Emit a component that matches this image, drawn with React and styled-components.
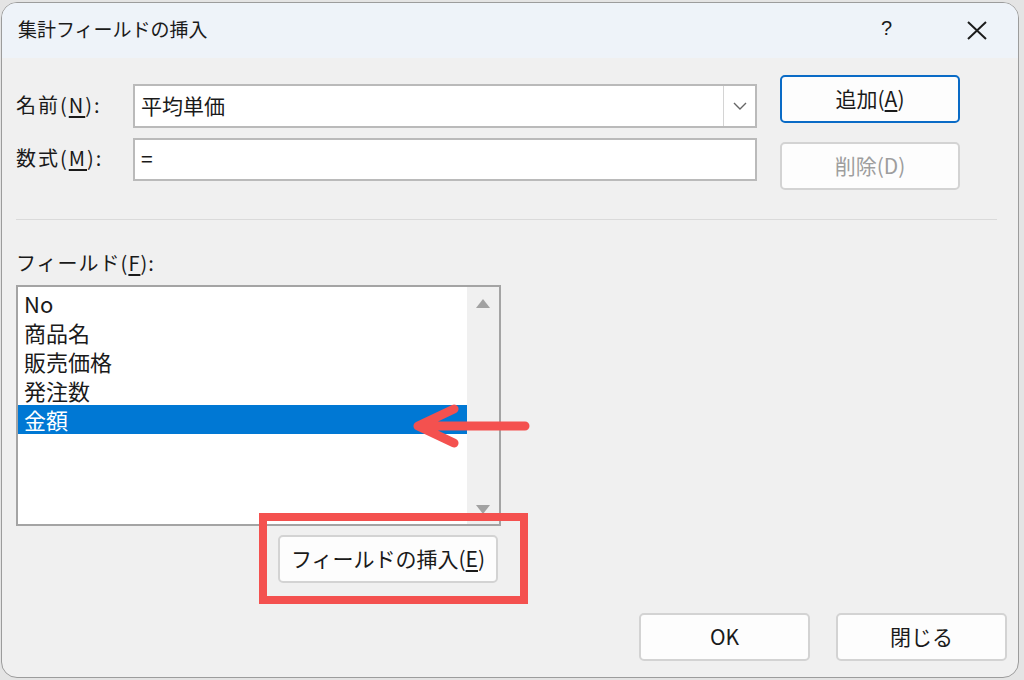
import styled, { createGlobalStyle } from 'styled-components';

const GlobalStyle = createGlobalStyle`
  html, body {
    margin: 0;
    padding: 0;
    background: #e4e4e4;
    font-family: "Noto Sans CJK JP", "Noto Sans", sans-serif;
    color: #1a1a1a;
  }
`;

const FONT = `"Noto Sans CJK JP", "Noto Sans", sans-serif`;

const fields = ['No', '商品名', '販売価格', '発注数', '金額'];

const Window = styled.div`
  position: relative;
  box-sizing: border-box;
  width: 1018px;
  height: 676px;
  margin: 2px 0 0 1px;
  border: 1px solid #9c9c9c;
  border-radius: 16px;
  overflow: hidden;
  background: #f0f0f0;
  display: flex;
  flex-direction: column;
`;

const TitleBar = styled.div`
  height: 55px;
  flex: none;
  background: #eef3f9;
  display: flex;
  align-items: center;
  padding: 0 31px 0 16px;
  font-size: 19px;
  font-family: ${FONT};
`;

const Title = styled.span`
  flex: 1;
  padding-bottom: 4px;
`;

const Help = styled.span`
  font-size: 20px;
  font-family: "Liberation Sans", sans-serif;
  padding-bottom: 4px;
  margin-right: 75px;
`;

const Body = styled.div`
  flex: 1;
  padding: 17px 11px 0 14px;
  display: flex;
  flex-direction: column;
`;

const TopSection = styled.div`
  display: flex;
  align-items: flex-start;
`;

const FormGrid = styled.div`
  margin-top: 9px;
  display: grid;
  grid-template-columns: 117px 624px;
  grid-auto-rows: 44px;
  row-gap: 9px;
  align-items: center;
`;

const Label = styled.label`
  font-size: 20px;
  letter-spacing: 2px;
  line-height: 24px;
  padding-bottom: 2px;
`;

const Key = styled.span`
  text-decoration: underline;
  text-underline-offset: 3px;
  text-decoration-thickness: 1.5px;
`;

const Field = styled.div`
  box-sizing: border-box;
  height: ${(p) => (p.$short ? 43 : 44)}px;
  background: #fff;
  border: 2px solid #bababa;
  display: flex;
  align-items: center;
  font-size: 21px;
  padding-left: 6px;
`;

const FieldText = styled.span`
  flex: 1;
  padding-bottom: 2px;
`;

const DropButton = styled.div`
  width: 31px;
  height: 100%;
  border-left: 1px solid #d4d4d4;
  display: flex;
  align-items: center;
  justify-content: center;
`;

const ButtonColumn = styled.div`
  margin-left: 23px;
  display: flex;
  flex-direction: column;
  gap: 19px;
`;

const Button = styled.button`
  box-sizing: border-box;
  width: ${(p) => p.$w || 180}px;
  height: 48px;
  background: #fdfdfd;
  border: 2px solid ${(p) => (p.$primary ? '#0a6bc6' : '#d3d3d3')};
  border-radius: 5px;
  font-family: ${FONT};
  font-size: 21px;
  color: ${(p) => (p.$disabled ? '#9e9e9e' : '#1a1a1a')};
  padding: 0 0 3px;
  display: flex;
  align-items: center;
  justify-content: center;
`;

const Separator = styled.div`
  height: 1px;
  background: #dadada;
  margin: 29px 10px 0 0;
`;

const SectionLabel = styled(Label)`
  margin-top: 31px;
  letter-spacing: 1px;
`;

const ListBox = styled.div`
  box-sizing: border-box;
  margin-top: 8px;
  width: 485px;
  height: 241px;
  border: 2px solid #a4a4a4;
  background: #fff;
  display: flex;
`;

const Items = styled.div`
  flex: 1;
  padding-top: 2px;
`;

const Item = styled.div`
  height: 29px;
  line-height: 28px;
  padding-left: 6px;
  font-size: 22px;
  background: ${(p) => (p.$selected ? '#0078d4' : 'transparent')};
  color: ${(p) => (p.$selected ? '#fff' : '#1a1a1a')};
`;

const ScrollBar = styled.div`
  width: 32px;
  background: #f0f0f0;
  display: flex;
  flex-direction: column;
  align-items: center;
  justify-content: space-between;
  padding: 12px 0 10px;
`;

const InsertRow = styled.div`
  width: 485px;
  margin-top: 9px;
  display: flex;
  justify-content: flex-end;
  padding-right: 3px;
  box-sizing: border-box;
`;

const Footer = styled.div`
  margin-top: 30px;
  display: flex;
  justify-content: flex-end;
  gap: 26px;
`;

const Highlight = styled.div`
  position: absolute;
  left: 257px;
  top: 510px;
  width: 269px;
  height: 91px;
  box-sizing: border-box;
  border: 8px solid #f4514f;
  pointer-events: none;
`;

const Arrow = styled.svg`
  position: absolute;
  left: 409px;
  top: 398px;
  pointer-events: none;
`;

const Triangle = ({ up }) => (
  <svg width="14" height="9" viewBox="0 0 14 9">
    <polygon points={up ? '7,0 14,9 0,9' : '0,0 14,0 7,9'} fill="#a2a2a2" />
  </svg>
);

export default function App() {
  return (
    <>
      <GlobalStyle />
      <Window>
        <TitleBar>
          <Title>集計フィールドの挿入</Title>
          <Help>?</Help>
          <svg width="20" height="19" viewBox="0 0 20 19">
            <path d="M1 1 L19 18 M19 1 L1 18" stroke="#1c1c1c" strokeWidth="2" />
          </svg>
        </TitleBar>
        <Body>
          <TopSection>
            <FormGrid>
              <Label>名前(<Key>N</Key>):</Label>
              <Field>
                <FieldText>平均単価</FieldText>
                <DropButton>
                  <svg width="14" height="8" viewBox="0 0 14 8">
                    <polyline points="1,1 7,7 13,1" fill="none" stroke="#666" strokeWidth="1.4" />
                  </svg>
                </DropButton>
              </Field>
              <Label>数式(<Key>M</Key>):</Label>
              <Field $short>
                <FieldText>=</FieldText>
              </Field>
            </FormGrid>
            <ButtonColumn>
              <Button $primary>追加(<Key>A</Key>)</Button>
              <Button $disabled>削除(D)</Button>
            </ButtonColumn>
          </TopSection>
          <Separator />
          <SectionLabel>フィールド(<Key>F</Key>):</SectionLabel>
          <ListBox>
            <Items>
              {fields.map((f) => (
                <Item key={f} $selected={f === '金額'}>{f}</Item>
              ))}
            </Items>
            <ScrollBar>
              <Triangle up />
              <Triangle />
            </ScrollBar>
          </ListBox>
          <InsertRow>
            <Button $w={220}>フィールドの挿入(<Key>E</Key>)</Button>
          </InsertRow>
          <Footer>
            <Button $w={171}>OK</Button>
            <Button $w={171}>閉じる</Button>
          </Footer>
        </Body>
        <Highlight />
        <Arrow width="120" height="50" viewBox="0 0 120 50">
          <path
            d="M114 25 L8 25 M43 8 L7 25 L43 42"
            fill="none"
            stroke="#f4514f"
            strokeWidth="9"
            strokeLinecap="round"
            strokeLinejoin="round"
          />
        </Arrow>
      </Window>
    </>
  );
}
